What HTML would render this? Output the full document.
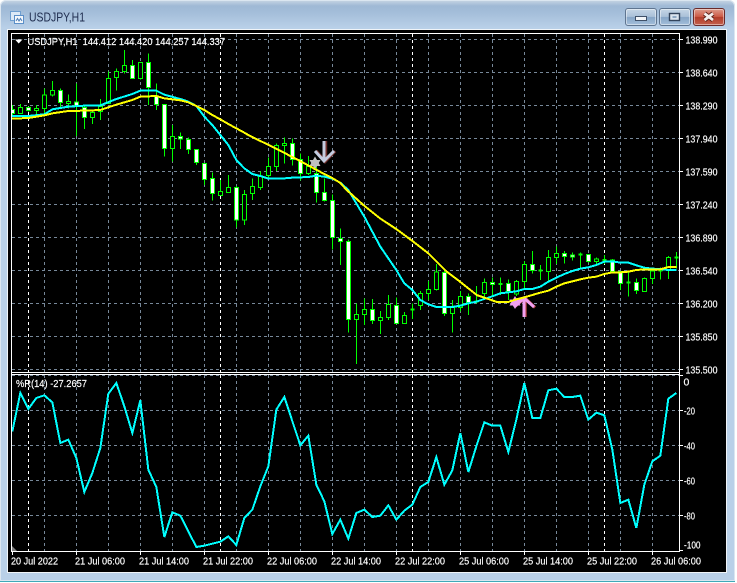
<!DOCTYPE html>
<html><head><meta charset="utf-8"><title>USDJPY,H1</title>
<style>
html,body{margin:0;padding:0;background:#fff;width:737px;height:583px;overflow:hidden}
#w{position:absolute;left:0;top:0;width:735px;height:581px;background:linear-gradient(#c8d6e4 0,#9fb9d5 6px,#a3bdd9 12px,#b9d0e8 28px,#b9d0e8 100%);border-radius:6px 6px 0 0;box-shadow:inset 0 0 0 1px #dbe6f0;border-bottom:1px solid #3fa9b8}
#b{position:absolute;left:8px;top:30px;width:718px;height:542px;background:#000;box-shadow:0 0 0 1px #f0f4f8}
#t{position:absolute;left:7px;top:29px;width:720px;height:1px;background:#7b8a9a}
.btn{position:absolute;top:8px;width:30px;height:16px;border:1px solid #5f7590;border-radius:3px;box-shadow:inset 0 0 0 1px rgba(255,255,255,.45);background:linear-gradient(#c6d6e6,#a9c0d8 48%,#86a5c6 52%,#a4bfdb)}
svg{position:absolute;left:0;top:0}
text{font-family:"Liberation Sans",sans-serif;font-size:10.5px;fill:#fff;stroke:#fff;stroke-width:.18px}
</style></head><body>
<div id="w"></div><div id="t"></div><div id="b"></div>
<div class="btn" style="left:625px"></div>
<div class="btn" style="left:659px"></div>
<div class="btn" style="left:693px;border-color:#6a2a2a;background:linear-gradient(#dd9c8c,#cc5a46 48%,#b23c2a 52%,#c4604c)"></div>
<svg width="737" height="583" viewBox="0 0 737 583">
<defs>
<clipPath id="c1"><rect x="12" y="34" width="667" height="338"/></clipPath>
<clipPath id="c2"><rect x="12" y="375" width="667" height="176"/></clipPath>
</defs>
<!-- window buttons glyphs -->
<rect x="635.5" y="16.5" width="11" height="4" fill="#f2f5f8" stroke="#3f5068"/>
<rect x="669.5" y="13.5" width="10" height="7" fill="#dbe5ef" stroke="#33445c" stroke-width="1.4"/>
<rect x="672.5" y="16" width="4" height="2" fill="#8ea8c4"/>
<path d="M704.5 13.5L713 20M713 13.5L704.5 20" stroke="#5a2018" stroke-width="4.6" fill="none"/>
<path d="M704.5 13.5L713 20M713 13.5L704.5 20" stroke="#f4eeec" stroke-width="2.8" fill="none"/>
<!-- title icon -->
<rect x="10.5" y="11.5" width="10" height="9" fill="#dce9f6" stroke="#6f9fd0"/>
<rect x="14.5" y="15.5" width="9" height="8" fill="#f4f8fc" stroke="#5b8fc8"/>
<path d="M16 21l1.5-2.5 1.5 2.5 1.5-2.5 1.5 2.5" stroke="#4d7fb8" fill="none"/>
<text x="29" y="21.5" style="font-size:12.5px;fill:#1f2d4f;stroke:none" textLength="56" lengthAdjust="spacingAndGlyphs">USDJPY,H1</text>
<!-- chart frame -->
<g shape-rendering="crispEdges">
<path d="M12 39.5H679M12 72.5H679M12 105.5H679M12 138.5H679M12 171.5H679M12 204.5H679M12 237.5H679M12 270.5H679M12 303.5H679M12 336.5H679M12 369.5H679M12 375.5H679M12 410.5H679M12 445.5H679M12 480.5H679M12 515.5H679" stroke="#778899" stroke-dasharray="3 3" fill="none"/>
<path d="M44.5 34V372M44.5 375V551M76.5 34V372M76.5 375V551M108.5 34V372M108.5 375V551M140.5 34V372M140.5 375V551M172.5 34V372M172.5 375V551M204.5 34V372M204.5 375V551M236.5 34V372M236.5 375V551M268.5 34V372M268.5 375V551M300.5 34V372M300.5 375V551M332.5 34V372M332.5 375V551M364.5 34V372M364.5 375V551M396.5 34V372M396.5 375V551M428.5 34V372M428.5 375V551M460.5 34V372M460.5 375V551M492.5 34V372M492.5 375V551M524.5 34V372M524.5 375V551M556.5 34V372M556.5 375V551M588.5 34V372M588.5 375V551M620.5 34V372M620.5 375V551M652.5 34V372M652.5 375V551" stroke="#778899" stroke-dasharray="3 3" fill="none"/>
<path d="M28.5 34V372M28.5 375V551M220.5 34V372M220.5 375V551M412.5 34V372M412.5 375V551M604.5 34V372M604.5 375V551" stroke="#fff" stroke-dasharray="3 3" fill="none"/>
</g>
<!-- candles -->
<g clip-path="url(#c1)"><g transform="scale(.333333)" shape-rendering="crispEdges" stroke="#00ff00" stroke-width="3">
<path fill="none" d="M37.5 315V345M61.5 312V342M85.5 320V335M109.5 315V345M133.5 265V345M157.5 243V290M181.5 265V325M205.5 283V325M229.5 250V408M253.5 320V387M277.5 335V372M301.5 297V360M325.5 215V310M349.5 205V272M373.5 150V220M397.5 180V235M421.5 187V238M445.5 160V315M469.5 250V330M493.5 312V470M517.5 375V485M541.5 397V447M565.5 412V462M589.5 448V495M613.5 490V555M637.5 518V602M661.5 540V587M685.5 525V578M709.5 558V682M733.5 570V675M757.5 535V600M781.5 515V570M805.5 472V535M829.5 430V513M853.5 412V490M877.5 415V497M901.5 460V542M925.5 468V525M949.5 500V608M973.5 535V605M997.5 583V748M1021.5 685V795M1045.5 718V998M1069.5 910V1092M1093.5 895V975M1117.5 897V972M1141.5 933V1002M1165.5 885V960M1189.5 892V972M1213.5 936V972M1237.5 910V957M1261.5 873V930M1285.5 843V900M1309.5 792V872M1333.5 810V948M1357.5 900V998M1381.5 873V935M1405.5 880V945M1429.5 858V910M1453.5 835V895M1477.5 832V890M1501.5 832V885M1525.5 838V900M1549.5 840V888M1573.5 783V866M1597.5 753V820M1621.5 795V840M1645.5 750V845M1669.5 740V792M1693.5 753V790M1717.5 758V782M1741.5 757V807M1765.5 763V788M1789.5 772V798M1813.5 765V792M1837.5 777V820M1861.5 813V870M1885.5 815V890M1909.5 835V882M1933.5 832V875M1957.5 810V852M1981.5 802V838M2005.5 768V837M2029.5 756V805"/>
<path fill="none" d="M1231.5 929h12M1423.5 905h12M1495.5 852h12M1615.5 811h12M1735.5 764h12M1807.5 780h12M1879.5 848h12M1975.5 812h12M2023.5 772h12" stroke-width="6"/>
<path fill="#000" d="M55.5 322h12V340h-12zM103.5 325h12V331h-12zM127.5 285h12V325h-12zM151.5 272h12V285h-12zM199.5 304h12V310h-12zM271.5 337h12V352h-12zM295.5 320h12V335h-12zM319.5 235h12V310h-12zM343.5 214h12V232h-12zM367.5 196h12V214h-12zM415.5 187h12V235h-12zM511.5 409h12V445h-12zM655.5 575h12V587h-12zM679.5 562h12V577h-12zM727.5 583h12V660h-12zM751.5 559h12V581h-12zM775.5 528h12V563h-12zM799.5 499h12V527h-12zM823.5 437h12V500h-12zM847.5 431h12V437h-12zM919.5 500h12V520h-12zM1063.5 943h12V958h-12zM1087.5 928h12V943h-12zM1135.5 952h12V961h-12zM1159.5 913h12V952h-12zM1207.5 946h12V970h-12zM1255.5 880h12V916h-12zM1279.5 868h12V881h-12zM1303.5 816h12V869h-12zM1351.5 922h12V940h-12zM1375.5 889h12V922h-12zM1447.5 847h12V881h-12zM1543.5 844h12V882h-12zM1567.5 793h12V845h-12zM1639.5 772h12V815h-12zM1663.5 760h12V773h-12zM1783.5 777h12V785h-12zM1927.5 835h12V875h-12zM1951.5 813h12V835h-12zM1999.5 772h12V808h-12z"/>
<path fill="#fff" d="M31.5 328h12V340h-12zM79.5 322h12V331h-12zM175.5 272h12V307h-12zM223.5 306h12V316h-12zM247.5 323h12V352h-12zM391.5 196h12V235h-12zM439.5 187h12V262h-12zM463.5 288h12V313h-12zM487.5 313h12V445h-12zM535.5 409h12V417h-12zM559.5 418h12V448h-12zM583.5 448h12V487h-12zM607.5 490h12V538h-12zM631.5 535h12V580h-12zM703.5 562h12V660h-12zM871.5 431h12V478h-12zM895.5 479h12V520h-12zM943.5 520h12V578h-12zM967.5 577h12V602h-12zM991.5 601h12V712h-12zM1015.5 715h12V725h-12zM1039.5 724h12V958h-12zM1111.5 928h12V961h-12zM1183.5 917h12V970h-12zM1327.5 817h12V940h-12zM1399.5 889h12V908h-12zM1471.5 847h12V854h-12zM1519.5 850h12V875h-12zM1591.5 793h12V811h-12zM1687.5 760h12V770h-12zM1711.5 765h12V771h-12zM1759.5 763h12V784h-12zM1831.5 780h12V815h-12zM1855.5 815h12V850h-12zM1903.5 847h12V872h-12z"/>
</g>
<!-- arrows and stars -->
<path d="M325.5 141V161M316 151L325 161.5L335 151" stroke="#70302c" stroke-width="3.4" fill="none"/>
<path d="M324 141V161M315 151L324 161L334 151" stroke="#c4cce0" stroke-width="3" fill="none"/>
<path d="M315 156.5L320.5 166H309.5zM315 169.5L309.5 160H320.5z" fill="#c0c0c0"/>
<path d="M525.2 299V317M515 306.5L525 298L535 307.5" stroke="#b04040" stroke-width="3" fill="none"/>
<path d="M524 299V317M514 307L524 298L534 307" stroke="#f0a0f0" stroke-width="3" fill="none"/>
<path d="M515 296L520.5 305.5H509.5zM515 309L509.5 299.5H520.5z" fill="#f0a0f0"/>
<!-- moving averages -->
<g transform="scale(.333333)" fill="none" stroke-width="6" shape-rendering="crispEdges">
<polyline stroke="#00ffff" points="36,348 85,348 133,343 157,328 205,320 253,317 301,316 349,297 397,282 421,272 469,272 493,284 541,297 565,305 589,318 613,350 637,375 661,405 685,435 709,480 733,505 757,522 781,528 805,536 853,535 877,533 925,531 949,527 973,530 997,536 1021,548 1045,570 1069,610 1093,650 1117,695 1141,740 1165,775 1189,810 1213,850 1237,870 1261,900 1285,913 1309,921 1357,921 1381,917 1405,910 1429,905 1453,897 1477,889 1501,880 1549,874 1573,867 1597,867 1621,860 1645,845 1669,833 1693,822 1717,813 1741,806 1765,802 1789,795 1813,785 1837,784 1861,788 1885,788 1909,796 1933,803 1957,806 1981,807 2005,810 2029,810"/>
<polyline stroke="#ffff00" points="36,356 85,354 133,346 157,340 205,333 253,332 301,330 349,314 397,300 421,290 469,288 493,295 541,301 565,307 589,318 613,330 637,345 661,358 685,372 709,385 733,398 750,408 800,432 850,457 900,483 950,510 998,535 1020,548 1040,570 1090,615 1140,655 1190,688 1240,725 1285,760 1310,785 1340,815 1380,845 1405,865 1430,885 1453,893 1491,906 1525,906 1549,898 1573,892 1597,885 1621,878 1645,872 1669,860 1693,850 1717,844 1741,838 1765,833 1789,830 1813,822 1837,817 1861,817 1885,815 1909,810 1933,808 1957,808 1981,808 2005,801 2029,801"/>
</g></g>
<!-- WPR -->
<g clip-path="url(#c2)"><g transform="scale(.333333)" fill="none" stroke-width="6" shape-rendering="crispEdges">
<polyline stroke="#00ffff" points="37,1294 61,1179 85,1227 109,1194 133,1186 157,1207 181,1329 205,1319 229,1374 253,1476 277,1419 301,1344 325,1181 349,1149 373,1219 397,1299 421,1201 445,1409 469,1461 493,1611 517,1537 541,1547 589,1641 613,1637 661,1625 685,1609 709,1635 733,1554 757,1529 781,1459 805,1399 829,1229 853,1191 901,1336 925,1307 949,1454 973,1504 997,1602 1021,1559 1045,1616 1069,1539 1093,1529 1117,1551 1141,1547 1165,1516 1189,1559 1213,1532 1237,1514 1261,1461 1285,1446 1309,1371 1333,1454 1357,1411 1381,1299 1405,1416 1429,1339 1453,1267 1477,1277 1501,1277 1525,1356 1549,1259 1573,1149 1597,1254 1621,1254 1645,1171 1669,1166 1693,1191 1717,1191 1741,1187 1765,1259 1789,1238 1813,1246 1837,1349 1861,1509 1885,1499 1909,1584 1933,1454 1957,1384 1981,1367 2005,1196 2029,1179"/>
</g></g>
<path d="M12 546L17 551H12z" fill="#808080"/>
<g shape-rendering="crispEdges" fill="none" stroke="#fff">
<path d="M11 33.5H679.5V551.5H11.5V33.5M11 372.5H679M11 374.5H679"/>
<path d="M680 39.5h3M680 72.5h3M680 105.5h3M680 138.5h3M680 171.5h3M680 204.5h3M680 237.5h3M680 270.5h3M680 303.5h3M680 336.5h3M680 369.5h3M680 375.5h3M680 410.5h3M680 445.5h3M680 480.5h3M680 515.5h3M680 550.5h3"/>
<path d="M12.5 552v3M76.5 552v3M140.5 552v3M204.5 552v3M268.5 552v3M332.5 552v3M396.5 552v3M460.5 552v3M524.5 552v3M588.5 552v3M652.5 552v3"/>
</g>
<!-- header -->
<path d="M15 39.5H22.5L18.7 43.5z" fill="#fff"/>
<text x="27.5" y="45" textLength="197.5" lengthAdjust="spacingAndGlyphs" xml:space="preserve">USDJPY,H1  144.412 144.420 144.257 144.337</text>
<text x="16" y="387" textLength="71" lengthAdjust="spacingAndGlyphs">%R(14) -27.2657</text>
<!-- price axis -->
<g>
<text x="685.5" y="43.5" textLength="32" lengthAdjust="spacingAndGlyphs">138.990</text>
<text x="685.5" y="76.5" textLength="32" lengthAdjust="spacingAndGlyphs">138.640</text>
<text x="685.5" y="109.5" textLength="32" lengthAdjust="spacingAndGlyphs">138.290</text>
<text x="685.5" y="142.5" textLength="32" lengthAdjust="spacingAndGlyphs">137.940</text>
<text x="685.5" y="175.5" textLength="32" lengthAdjust="spacingAndGlyphs">137.590</text>
<text x="685.5" y="208.5" textLength="32" lengthAdjust="spacingAndGlyphs">137.240</text>
<text x="685.5" y="241.5" textLength="32" lengthAdjust="spacingAndGlyphs">136.890</text>
<text x="685.5" y="274.5" textLength="32" lengthAdjust="spacingAndGlyphs">136.540</text>
<text x="685.5" y="307.5" textLength="32" lengthAdjust="spacingAndGlyphs">136.200</text>
<text x="685.5" y="340.5" textLength="32" lengthAdjust="spacingAndGlyphs">135.850</text>
<text x="685.5" y="373.5" textLength="32" lengthAdjust="spacingAndGlyphs">135.500</text>
<text x="683.5" y="385.5">0</text>
<text x="684" y="414.5" textLength="11" lengthAdjust="spacingAndGlyphs">-20</text>
<text x="684" y="449.5" textLength="11" lengthAdjust="spacingAndGlyphs">-40</text>
<text x="684" y="484.5" textLength="11" lengthAdjust="spacingAndGlyphs">-60</text>
<text x="684" y="519.5" textLength="11" lengthAdjust="spacingAndGlyphs">-80</text>
<text x="684" y="548.5" textLength="16.5" lengthAdjust="spacingAndGlyphs">-100</text>
</g>
<!-- time axis -->
<g>
<text x="11" y="564.5" textLength="47" lengthAdjust="spacingAndGlyphs">20 Jul 2022</text>
<text x="75" y="564.5" textLength="50" lengthAdjust="spacingAndGlyphs">21 Jul 06:00</text>
<text x="139" y="564.5" textLength="50" lengthAdjust="spacingAndGlyphs">21 Jul 14:00</text>
<text x="203" y="564.5" textLength="50" lengthAdjust="spacingAndGlyphs">21 Jul 22:00</text>
<text x="267" y="564.5" textLength="50" lengthAdjust="spacingAndGlyphs">22 Jul 06:00</text>
<text x="331" y="564.5" textLength="50" lengthAdjust="spacingAndGlyphs">22 Jul 14:00</text>
<text x="395" y="564.5" textLength="50" lengthAdjust="spacingAndGlyphs">22 Jul 22:00</text>
<text x="459" y="564.5" textLength="50" lengthAdjust="spacingAndGlyphs">25 Jul 06:00</text>
<text x="523" y="564.5" textLength="50" lengthAdjust="spacingAndGlyphs">25 Jul 14:00</text>
<text x="587" y="564.5" textLength="50" lengthAdjust="spacingAndGlyphs">25 Jul 22:00</text>
<text x="651" y="564.5" textLength="50" lengthAdjust="spacingAndGlyphs">26 Jul 06:00</text>
</g>
</svg>
</body></html>
